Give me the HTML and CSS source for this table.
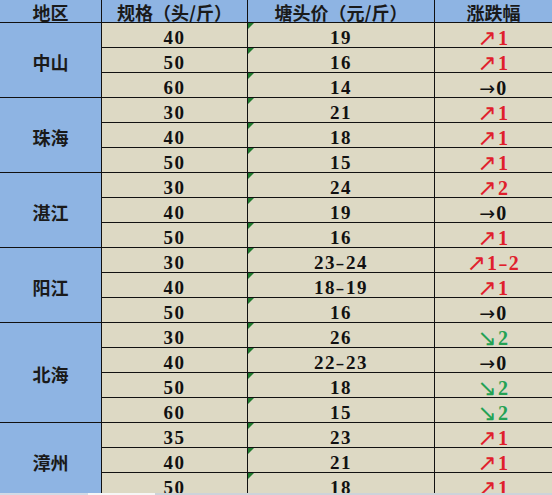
FILE: index.html
```html
<!DOCTYPE html>
<html lang="zh">
<head>
<meta charset="utf-8">
<link rel="stylesheet" href="styles.css">
</head>
<body>
<div class="frame">
  <div class="sheet">
    <div class="cell head">地区</div>
    <div class="cell head">规格（头/斤）</div>
    <div class="cell head">塘头价（元/斤）</div>
    <div class="cell head last">涨跌幅</div>

    <div class="cell region span3">中山</div>
    <div class="cell num">40</div><div class="cell num mark">19</div><div class="cell chg last up"><span class="arr">↗</span>1</div>
    <div class="cell num">50</div><div class="cell num mark">16</div><div class="cell chg last up"><span class="arr">↗</span>1</div>
    <div class="cell num">60</div><div class="cell num mark">14</div><div class="cell chg last flat"><span class="arr flat-arr">→</span>0</div>

    <div class="cell region span3">珠海</div>
    <div class="cell num">30</div><div class="cell num mark">21</div><div class="cell chg last up"><span class="arr">↗</span>1</div>
    <div class="cell num">40</div><div class="cell num mark">18</div><div class="cell chg last up"><span class="arr">↗</span>1</div>
    <div class="cell num">50</div><div class="cell num mark">15</div><div class="cell chg last up"><span class="arr">↗</span>1</div>

    <div class="cell region span3">湛江</div>
    <div class="cell num">30</div><div class="cell num mark">24</div><div class="cell chg last up"><span class="arr">↗</span>2</div>
    <div class="cell num">40</div><div class="cell num mark">19</div><div class="cell chg last flat"><span class="arr flat-arr">→</span>0</div>
    <div class="cell num">50</div><div class="cell num mark">16</div><div class="cell chg last up"><span class="arr">↗</span>1</div>

    <div class="cell region span3">阳江</div>
    <div class="cell num">30</div><div class="cell num mark">23<span class="dash">-</span>24</div><div class="cell chg last up"><span class="arr">↗</span>1<span class="dash">-</span>2</div>
    <div class="cell num">40</div><div class="cell num mark">18<span class="dash">-</span>19</div><div class="cell chg last up"><span class="arr">↗</span>1</div>
    <div class="cell num">50</div><div class="cell num mark">16</div><div class="cell chg last flat"><span class="arr flat-arr">→</span>0</div>

    <div class="cell region span4">北海</div>
    <div class="cell num">30</div><div class="cell num mark">26</div><div class="cell chg last down"><span class="arr">↘</span>2</div>
    <div class="cell num">40</div><div class="cell num mark">22<span class="dash">-</span>23</div><div class="cell chg last flat"><span class="arr flat-arr">→</span>0</div>
    <div class="cell num">50</div><div class="cell num mark">18</div><div class="cell chg last down"><span class="arr">↘</span>2</div>
    <div class="cell num">60</div><div class="cell num mark">15</div><div class="cell chg last down"><span class="arr">↘</span>2</div>

    <div class="cell region span3">漳州</div>
    <div class="cell num">35</div><div class="cell num mark">23</div><div class="cell chg last up"><span class="arr">↗</span>1</div>
    <div class="cell num">40</div><div class="cell num mark">21</div><div class="cell chg last up"><span class="arr">↗</span>1</div>
    <div class="cell num">50</div><div class="cell num mark">18</div><div class="cell chg last up"><span class="arr">↗</span>1</div>
  </div>
</div>
<div class="strip"></div>
</body>
</html>
```

FILE: styles.css
```css
html, body {
  margin: 0;
  padding: 0;
  overflow: hidden;
  background: #ffffff;
}

.frame {
  height: 493px;
  overflow: hidden;
}

.sheet {
  display: grid;
  grid-template-columns: 102px 146px 187px 117px;
  grid-template-rows: 23px repeat(19, 25px);
  width: 552px;
}

.cell {
  box-sizing: border-box;
  border-right: 1px solid #111;
  border-bottom: 1px solid #111;
  background: #ddd9c4;
  display: flex;
  align-items: center;
  justify-content: center;
  color: #111;
  white-space: nowrap;
  position: relative;
}

.cell.last {
  border-right: none;
}

.head {
  background: #8eb4e3;
  font-family: "Noto Sans CJK SC", sans-serif;
  font-weight: 700;
  font-size: 18px;
  line-height: 18px;
  color: #1a1a1a;
  padding-top: 1px;
}

.region {
  background: #8eb4e3;
  font-family: "Noto Sans CJK SC", sans-serif;
  font-weight: 700;
  font-size: 18px;
  line-height: 20px;
  color: #1a1a1a;
  padding-top: 3px;
}

.span3 { grid-row: span 3; }
.span4 { grid-row: span 4; }

.num, .chg {
  font-family: "Liberation Serif", serif;
  font-weight: 700;
  font-size: 19px;
  line-height: 20px;
  letter-spacing: 1.5px;
  padding-top: 5px;
}

.dash {
  display: inline-block;
  transform: scaleX(1.4);
  font-weight: 400;
  margin: 0 1px;
}

.mark::before {
  content: "";
  position: absolute;
  left: 0;
  top: 0;
  width: 0;
  height: 0;
  border-top: 6px solid #1f7a2e;
  border-right: 6px solid transparent;
}

.chg {
  font-size: 20px;
}

.arr {
  font-family: "DejaVu Sans", sans-serif;
  font-weight: 400;
  font-size: 23px;
  line-height: 20px;
  letter-spacing: 0;
  margin-right: 1px;
}

.flat-arr {
  font-size: 19px;
  margin-right: 1px;
}

.up { color: #e0202c; }
.down { color: #24a254; }
.flat { color: #111; }

.strip {
  height: 2px;
  background: linear-gradient(to right, #d3dbe6 0 88px, #f6f6f6 88px 155px, #cdd3da 155px);
}
```
